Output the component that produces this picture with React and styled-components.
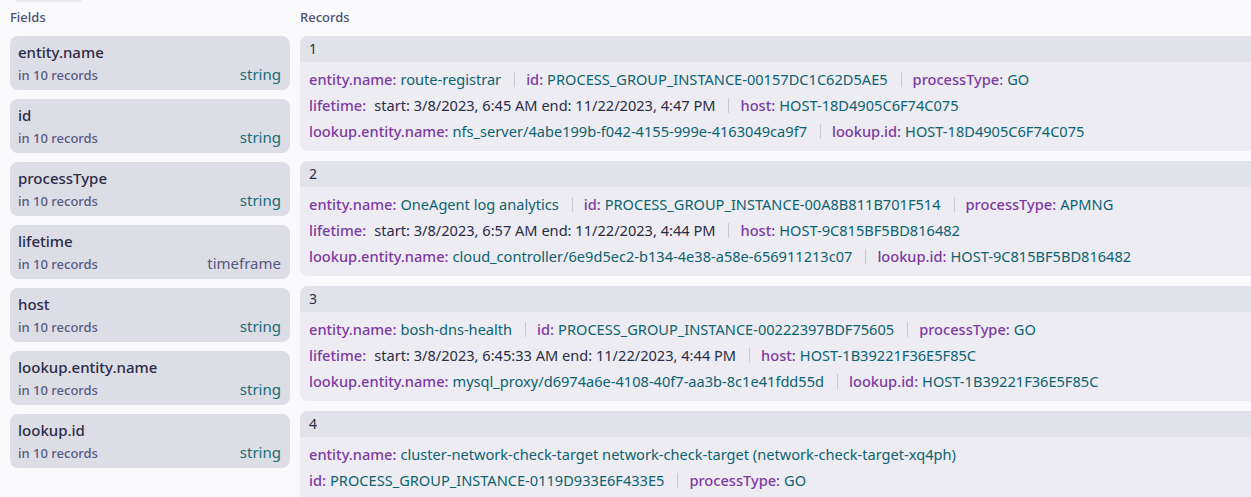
import React from 'react';
import styled, { createGlobalStyle } from 'styled-components';

const GlobalStyle = createGlobalStyle`
  html, body {
    margin: 0;
    padding: 0;
    overflow: hidden;
    background: #fafafc;
  }
  body {
    font-family: "Noto Sans", "Open Sans", sans-serif;
    color: #2b2c47;
  }
`;

const FIELDS = [
  { name: 'entity.name', type: 'string' },
  { name: 'id', type: 'string' },
  { name: 'processType', type: 'string' },
  { name: 'lifetime', type: 'timeframe' },
  { name: 'host', type: 'string' },
  { name: 'lookup.entity.name', type: 'string' },
  { name: 'lookup.id', type: 'string' },
];

const RECORDS = [
  {
    id: 1,
    lines: [
      [
        { label: 'entity.name', value: 'route-registrar' },
        { label: 'id', value: 'PROCESS_GROUP_INSTANCE-00157DC1C62D5AE5' },
        { label: 'processType', value: 'GO' },
      ],
      [
        { label: 'lifetime', time: 'start: 3/8/2023, 6:45 AM end: 11/22/2023, 4:47 PM' },
        { label: 'host', value: 'HOST-18D4905C6F74C075' },
      ],
      [
        { label: 'lookup.entity.name', value: 'nfs_server/4abe199b-f042-4155-999e-4163049ca9f7' },
        { label: 'lookup.id', value: 'HOST-18D4905C6F74C075' },
      ],
    ],
  },
  {
    id: 2,
    lines: [
      [
        { label: 'entity.name', value: 'OneAgent log analytics' },
        { label: 'id', value: 'PROCESS_GROUP_INSTANCE-00A8B811B701F514' },
        { label: 'processType', value: 'APMNG' },
      ],
      [
        { label: 'lifetime', time: 'start: 3/8/2023, 6:57 AM end: 11/22/2023, 4:44 PM' },
        { label: 'host', value: 'HOST-9C815BF5BD816482' },
      ],
      [
        { label: 'lookup.entity.name', value: 'cloud_controller/6e9d5ec2-b134-4e38-a58e-656911213c07' },
        { label: 'lookup.id', value: 'HOST-9C815BF5BD816482' },
      ],
    ],
  },
  {
    id: 3,
    lines: [
      [
        { label: 'entity.name', value: 'bosh-dns-health' },
        { label: 'id', value: 'PROCESS_GROUP_INSTANCE-00222397BDF75605' },
        { label: 'processType', value: 'GO' },
      ],
      [
        { label: 'lifetime', time: 'start: 3/8/2023, 6:45:33 AM end: 11/22/2023, 4:44 PM' },
        { label: 'host', value: 'HOST-1B39221F36E5F85C' },
      ],
      [
        { label: 'lookup.entity.name', value: 'mysql_proxy/d6974a6e-4108-40f7-aa3b-8c1e41fdd55d' },
        { label: 'lookup.id', value: 'HOST-1B39221F36E5F85C' },
      ],
    ],
  },
  {
    id: 4,
    lines: [
      [
        { label: 'entity.name', value: 'cluster-network-check-target network-check-target (network-check-target-xq4ph)' },
      ],
      [
        { label: 'id', value: 'PROCESS_GROUP_INSTANCE-0119D933E6F433E5' },
        { label: 'processType', value: 'GO' },
      ],
    ],
  },
];

const App = () => (
  <>
    <GlobalStyle />
    <Page>
      <Stub />
      <Columns>
        <Column>
          <Heading>Fields</Heading>
          <Stack gap={9}>
            {FIELDS.map(field => (
              <FieldCard key={field.name}>
                <FieldName>{field.name}</FieldName>
                <FieldMeta>
                  <Count>in 10 records</Count>
                  <FieldType muted={field.type !== 'string'}>{field.type}</FieldType>
                </FieldMeta>
              </FieldCard>
            ))}
          </Stack>
        </Column>
        <Column>
          <Heading>Records</Heading>
          <Stack gap={10}>
            {RECORDS.map(record => (
              <RecordCard key={record.id}>
                <RecordHeader>{record.id}</RecordHeader>
                <RecordBody>
                  {record.lines.map((line, i) => (
                    <Line key={i}>
                      {line.map((item, j) => (
                        <React.Fragment key={item.label}>
                          {j > 0 && <Separator />}
                          <Label>{item.label}:</Label>
                          {item.time ? (
                            <Time>{item.time}</Time>
                          ) : (
                            <Value>{item.value}</Value>
                          )}
                        </React.Fragment>
                      ))}
                    </Line>
                  ))}
                </RecordBody>
              </RecordCard>
            ))}
          </Stack>
        </Column>
      </Columns>
    </Page>
  </>
);

const Page = styled.div`
  width: 1270px;
  padding: 0 0 0 10px;
`;

const Stub = styled.div`
  width: 67px;
  height: 2px;
  margin-left: 5px;
  border-radius: 0 0 4px 4px;
  background: #ebebf1;
`;

const Columns = styled.div`
  display: grid;
  grid-template-columns: 280px 1fr;
  column-gap: 10px;
`;

const Column = styled.div`
  display: flex;
  flex-direction: column;
`;

const Heading = styled.div`
  font-size: 13px;
  font-weight: 500;
  line-height: 20px;
  color: #4b4f72;
  margin: 5px 0 9px;
`;

const Stack = styled.div`
  display: flex;
  flex-direction: column;
  gap: ${props => props.gap}px;
`;

const FieldCard = styled.div`
  box-sizing: border-box;
  height: 54px;
  background: #dddde6;
  border-radius: 8px;
  padding: 6px 9px 0 8px;
`;

const FieldName = styled.div`
  font-size: 15px;
  font-weight: 500;
  line-height: 20px;
  color: #2a2b46;
`;

const FieldMeta = styled.div`
  display: flex;
  justify-content: space-between;
  align-items: baseline;
  margin-top: 2px;
  height: 20px;
  line-height: 20px;
`;

const Count = styled.span`
  font-size: 13px;
  font-weight: 500;
  color: #575b82;
`;

const FieldType = styled.span`
  font-size: 15px;
  color: ${props => (props.muted ? '#55587c' : '#1a6c76')};
`;

const RecordCard = styled.div`
  border-radius: 8px 0 0 8px;
  overflow: hidden;
  background: #ececf2;
`;

const RecordHeader = styled.div`
  height: 26px;
  line-height: 26px;
  padding: 0 9px;
  font-size: 14px;
  color: #2b2c45;
  background: #e2e2eb;
`;

const RecordBody = styled.div`
  padding: 4px 9px 7px;
`;

const Line = styled.div`
  display: flex;
  align-items: center;
  line-height: 26px;
  font-size: 14.6px;
  white-space: nowrap;
`;

const Label = styled.span`
  font-weight: 500;
  color: #7d3aa3;
  margin-right: 4px;
`;

const Value = styled.span`
  color: #0d6370;
`;

const Time = styled.span`
  color: #2b2c45;
  margin-left: 4px;
`;

const Separator = styled.span`
  display: inline-block;
  width: 1px;
  height: 15px;
  margin: 0 11px 0 13px;
  background: #c9c9d6;
`;

export default App;
